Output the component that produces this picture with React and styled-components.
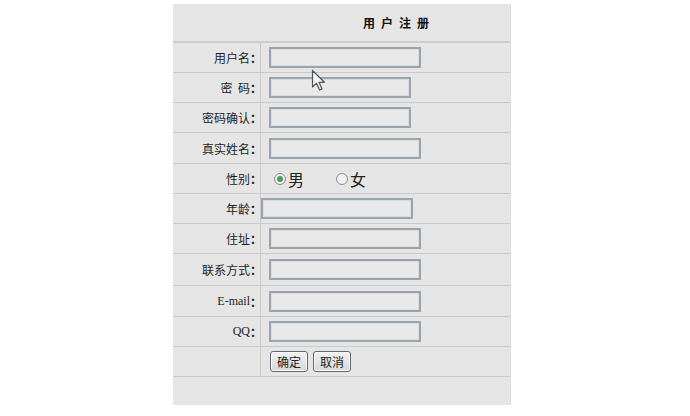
import React from "react"
import styled, { createGlobalStyle } from "styled-components"

const GlobalStyle = createGlobalStyle`
  html, body {
    margin: 0;
    padding: 0;
    background: #ffffff;
  }
  body {
    font-family: "Noto Sans CJK SC", "Liberation Sans", sans-serif;
  }
`

const Page = styled.div`
  width: 690px;
  height: 416px;
  padding-top: 4px;
  box-sizing: border-box;
  position: relative;
  overflow: hidden;
`

const Panel = styled.div`
  margin-left: 173px;
  width: 338px;
  background: #e5e5e5;
  border-right: 1px solid #dcdcdc;
  box-sizing: border-box;
`

const Row = styled.div`
  display: grid;
  grid-template-columns: 88px 1fr;
  height: ${ props => props.h }px;
  border-bottom: 1px solid #c9c9c9;
  box-sizing: border-box;
`

const TitleRow = styled.div`
  height: 39px;
  border-bottom: 2px solid #cdcdcd;
  box-sizing: border-box;
  padding-left: 190px;
  display: flex;
  align-items: center;
  font-size: 12px;
  font-weight: bold;
  letter-spacing: 6px;
  color: #111;
`

const Label = styled.div`
  display: flex;
  align-items: center;
  justify-content: flex-end;
  padding-right: 4px;
  border-right: 1px solid #c9c9c9;
  font-size: 12px;
  color: #1e1e1e;
  font-family: ${ props => props.serif ? `"Liberation Serif", serif` : `"Noto Sans CJK SC", sans-serif` };
  white-space: pre;
`

const Colon = styled.span`
  font-family: "Noto Sans CJK SC", sans-serif;
  font-weight: bold;
  margin-right: -6px;
`

const Field = styled.div`
  display: flex;
  align-items: center;
  padding-left: ${ props => props.flush ? 0 : 8 }px;
`

const TextBox = styled.div`
  width: ${ props => props.w }px;
  height: 21px;
  box-sizing: border-box;
  border: 2px solid #99a4ad;
  box-shadow: inset 0 0 0 1px #d8dde0;
  background: #e9e9e9;
`

const Radio = styled.span`
  display: inline-flex;
  align-items: center;
  justify-content: center;
  width: 12px;
  height: 12px;
  box-sizing: border-box;
  border-radius: 50%;
  border: 1px solid #8c8c8c;
  background: #f0f0f0;
  margin-left: ${ props => props.gap }px;
  &::after {
    content: "";
    width: 6px;
    height: 6px;
    border-radius: 50%;
    background: ${ props => props.checked ? "#4f9a5c" : "transparent" };
  }
`

const RadioText = styled.span`
  font-size: 16px;
  color: #222;
  margin-left: 2px;
  line-height: 16px;
`

const Button = styled.div`
  height: 21px;
  padding: 0 6px;
  margin-left: ${ props => props.gap }px;
  display: flex;
  align-items: center;
  box-sizing: border-box;
  border: 1px solid #5e6a72;
  border-radius: 3px;
  background: linear-gradient(#f2f2f2, #d8d8d8);
  box-shadow: inset 0 0 0 1px #fafafa;
  font-size: 12px;
  color: #222;
`

const FootRow = styled.div`
  height: 28px;
`

const Cursor = styled.svg`
  position: absolute;
  left: 311px;
  top: 69px;
`

const fields = [
  { label: "用户名", w: 152 },
  { label: "密  码", w: 142 },
  { label: "密码确认", w: 142 },
  { label: "真实姓名", w: 152 },
  { label: "性别", gender: true },
  { label: "年龄", w: 152, flush: true },
  { label: "住址", w: 152 },
  { label: "联系方式", w: 152 },
  { label: "E-mail", w: 152, serif: true },
  { label: "QQ", w: 152, serif: true }
]

const heights = [30, 30, 30, 31, 30, 30, 30, 32, 31, 30]

export default function App() {
  return (
    <Page>
      <GlobalStyle />
      <Panel>
        <TitleRow>用户注册</TitleRow>
        { fields.map((f, i) =>
          <Row key={ i } h={ heights[i] }>
            <Label serif={ f.serif }>{ f.label }<Colon>：</Colon></Label>
            { f.gender ?
              <Field>
                <Radio gap={ 5 } checked />
                <RadioText>男</RadioText>
                <Radio gap={ 32 } />
                <RadioText>女</RadioText>
              </Field>
            :
              <Field flush={ f.flush }>
                <TextBox w={ f.w } />
              </Field>
            }
          </Row>
        ) }
        <Row h={ 30 }>
          <Label />
          <Field>
            <Button gap={ 1 }>确定</Button>
            <Button gap={ 5 }>取消</Button>
          </Field>
        </Row>
        <FootRow />
      </Panel>
      <Cursor width="18" height="24" viewBox="0 0 18 24">
        <path d="M1.5 1.5 L1.5 18 L5.5 14.2 L8.6 21 L11 19.9 L8 13.3 L13.4 13.3 Z"
          fill="#f4f4f4" stroke="#555" strokeWidth="1.2" strokeLinejoin="round" />
      </Cursor>
    </Page>
  )
}
